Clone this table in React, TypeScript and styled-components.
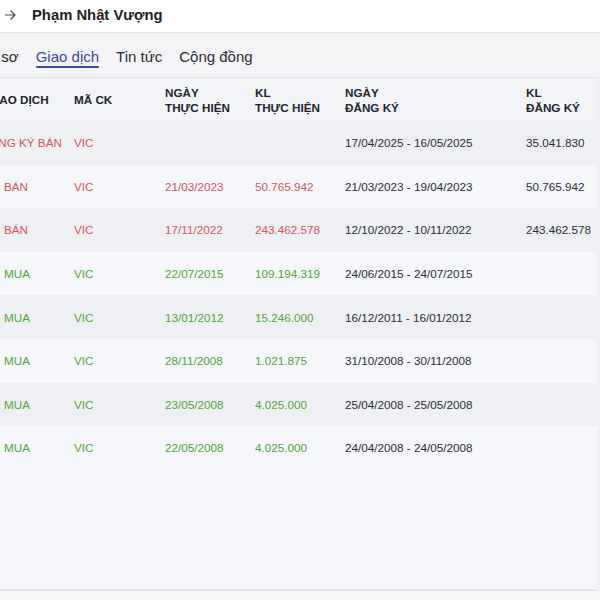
import React from "react";
import styled, { createGlobalStyle } from "styled-components";

const Global = createGlobalStyle`
  html, body { margin: 0; padding: 0; background: #ffffff; }
  body { font-family: "Liberation Sans", Arial, sans-serif; }
  * { box-sizing: border-box; }
`;

const Page = styled.div`
  width: 600px;
  height: 600px;
  overflow: hidden;
  display: flex;
  flex-direction: column;
  background: #ffffff;
`;

const TopBar = styled.div`
  height: 33px;
  flex: none;
  display: flex;
  align-items: center;
  gap: 16px;
  padding: 0 0 2px 5px;
  border-bottom: 1px solid #e3e4e8;
  background: #ffffff;
`;

const Title = styled.div`
  font-size: 14.8px;
  font-weight: 700;
  color: #1f2127;
`;

const TabBar = styled.div`
  height: 45px;
  flex: none;
  display: flex;
  align-items: stretch;
  background: #f4f4f6;
  border-bottom: 1px solid #e3e5ea;
  overflow: hidden;
`;

const TabTrack = styled.div`
  display: flex;
  gap: 17px;
  margin-left: -22px;
`;

const Tab = styled.div<{ $active?: boolean }>`
  position: relative;
  display: flex;
  align-items: center;
  padding-top: 3px;
  font-size: 15px;
  white-space: nowrap;
  color: ${(p) => (p.$active ? "#3b4a9c" : "#2a2c33")};
  &::after {
    content: "";
    display: ${(p) => (p.$active ? "block" : "none")};
    position: absolute;
    left: 0;
    right: 0;
    bottom: 9px;
    height: 2px;
    border-radius: 1px;
    background: #3b4a9c;
  }
`;

const TableArea = styled.div`
  flex: 1;
  display: flex;
  flex-direction: column;
  background: #f5f7fb;
  border-right: 3px solid #eef0f3;
  overflow: hidden;
`;

const Grid = styled.div`
  display: grid;
  grid-template-columns: 92px 91px 90px 90px 181px 120px;
  margin-left: -18px;
  width: 664px;
`;

const HeadCell = styled.div<{ $pad?: number }>`
  height: 43px;
  display: flex;
  align-items: center;
  padding-left: ${(p) => p.$pad ?? 0}px;
  font-size: 11.7px;
  font-weight: 700;
  line-height: 15px;
  color: #22252c;
  background: #f2f4f8;
  white-space: nowrap;
`;

const Cell = styled.div<{ $tone: "sell" | "buy" | "plain"; $odd: boolean; $pad?: number }>`
  height: 43.6px;
  display: flex;
  align-items: center;
  padding-left: ${(p) => p.$pad ?? 0}px;
  font-size: 11.7px;
  white-space: nowrap;
  background: ${(p) => (p.$odd ? "#eef0f4" : "#f5f7fb")};
  color: ${(p) =>
    p.$tone === "sell" ? "#d2555a" : p.$tone === "buy" ? "#54a33a" : "#2a2c33"};
`;

const Filler = styled.div`
  flex: 1;
  border-bottom: 2px solid #e2e4e8;
`;

const Bottom = styled.div`
  height: 9px;
  flex: none;
  background: #f7f7f8;
`;

type Row = {
  type: string;
  side: "sell" | "buy";
  code: string;
  date: string;
  vol: string;
  reg: string;
  regVol: string;
};

const rows: Row[] = [
  { type: "ĐĂNG KÝ BÁN", side: "sell", code: "VIC", date: "", vol: "", reg: "17/04/2025 - 16/05/2025", regVol: "35.041.830" },
  { type: "BÁN", side: "sell", code: "VIC", date: "21/03/2023", vol: "50.765.942", reg: "21/03/2023 - 19/04/2023", regVol: "50.765.942" },
  { type: "BÁN", side: "sell", code: "VIC", date: "17/11/2022", vol: "243.462.578", reg: "12/10/2022 - 10/11/2022", regVol: "243.462.578" },
  { type: "MUA", side: "buy", code: "VIC", date: "22/07/2015", vol: "109.194.319", reg: "24/06/2015 - 24/07/2015", regVol: "" },
  { type: "MUA", side: "buy", code: "VIC", date: "13/01/2012", vol: "15.246.000", reg: "16/12/2011 - 16/01/2012", regVol: "" },
  { type: "MUA", side: "buy", code: "VIC", date: "28/11/2008", vol: "1.021.875", reg: "31/10/2008 - 30/11/2008", regVol: "" },
  { type: "MUA", side: "buy", code: "VIC", date: "23/05/2008", vol: "4.025.000", reg: "25/04/2008 - 25/05/2008", regVol: "" },
  { type: "MUA", side: "buy", code: "VIC", date: "22/05/2008", vol: "4.025.000", reg: "24/04/2008 - 24/05/2008", regVol: "" },
];

const Arrow = () => (
  <svg width="11" height="10" viewBox="0 0 11 10" fill="none">
    <path d="M0.5 5H10M6 1l4 4-4 4" stroke="#4a4c52" strokeWidth="1.2" strokeLinecap="round" strokeLinejoin="round" />
  </svg>
);

const Br = () => <br />;

export default function App() {
  return (
    <>
      <Global />
      <Page>
        <TopBar>
          <Arrow />
          <Title>Phạm Nhật Vượng</Title>
        </TopBar>
        <TabBar>
          <TabTrack>
            <Tab>Hồ sơ</Tab>
            <Tab $active>Giao dịch</Tab>
            <Tab>Tin tức</Tab>
            <Tab>Cộng đồng</Tab>
          </TabTrack>
        </TabBar>
        <TableArea>
          <Grid>
            <HeadCell $pad={5}>GIAO DỊCH</HeadCell>
            <HeadCell>MÃ CK</HeadCell>
            <HeadCell>
              NGÀY<Br />THỰC HIỆN
            </HeadCell>
            <HeadCell>
              KL<Br />THỰC HIỆN
            </HeadCell>
            <HeadCell>
              NGÀY<Br />ĐĂNG KÝ
            </HeadCell>
            <HeadCell>
              KL<Br />ĐĂNG KÝ
            </HeadCell>
            {rows.map((r, i) => {
              const odd = i % 2 === 0;
              return (
                <React.Fragment key={i}>
                  <Cell $tone={r.side} $odd={odd} $pad={r.type.length > 4 ? 0 : 22}>
                    {r.type}
                  </Cell>
                  <Cell $tone={r.side} $odd={odd}>{r.code}</Cell>
                  <Cell $tone={r.side} $odd={odd}>{r.date}</Cell>
                  <Cell $tone={r.side} $odd={odd}>{r.vol}</Cell>
                  <Cell $tone="plain" $odd={odd}>{r.reg}</Cell>
                  <Cell $tone="plain" $odd={odd}>{r.regVol}</Cell>
                </React.Fragment>
              );
            })}
          </Grid>
          <Filler />
        </TableArea>
        <Bottom />
      </Page>
    </>
  );
}
